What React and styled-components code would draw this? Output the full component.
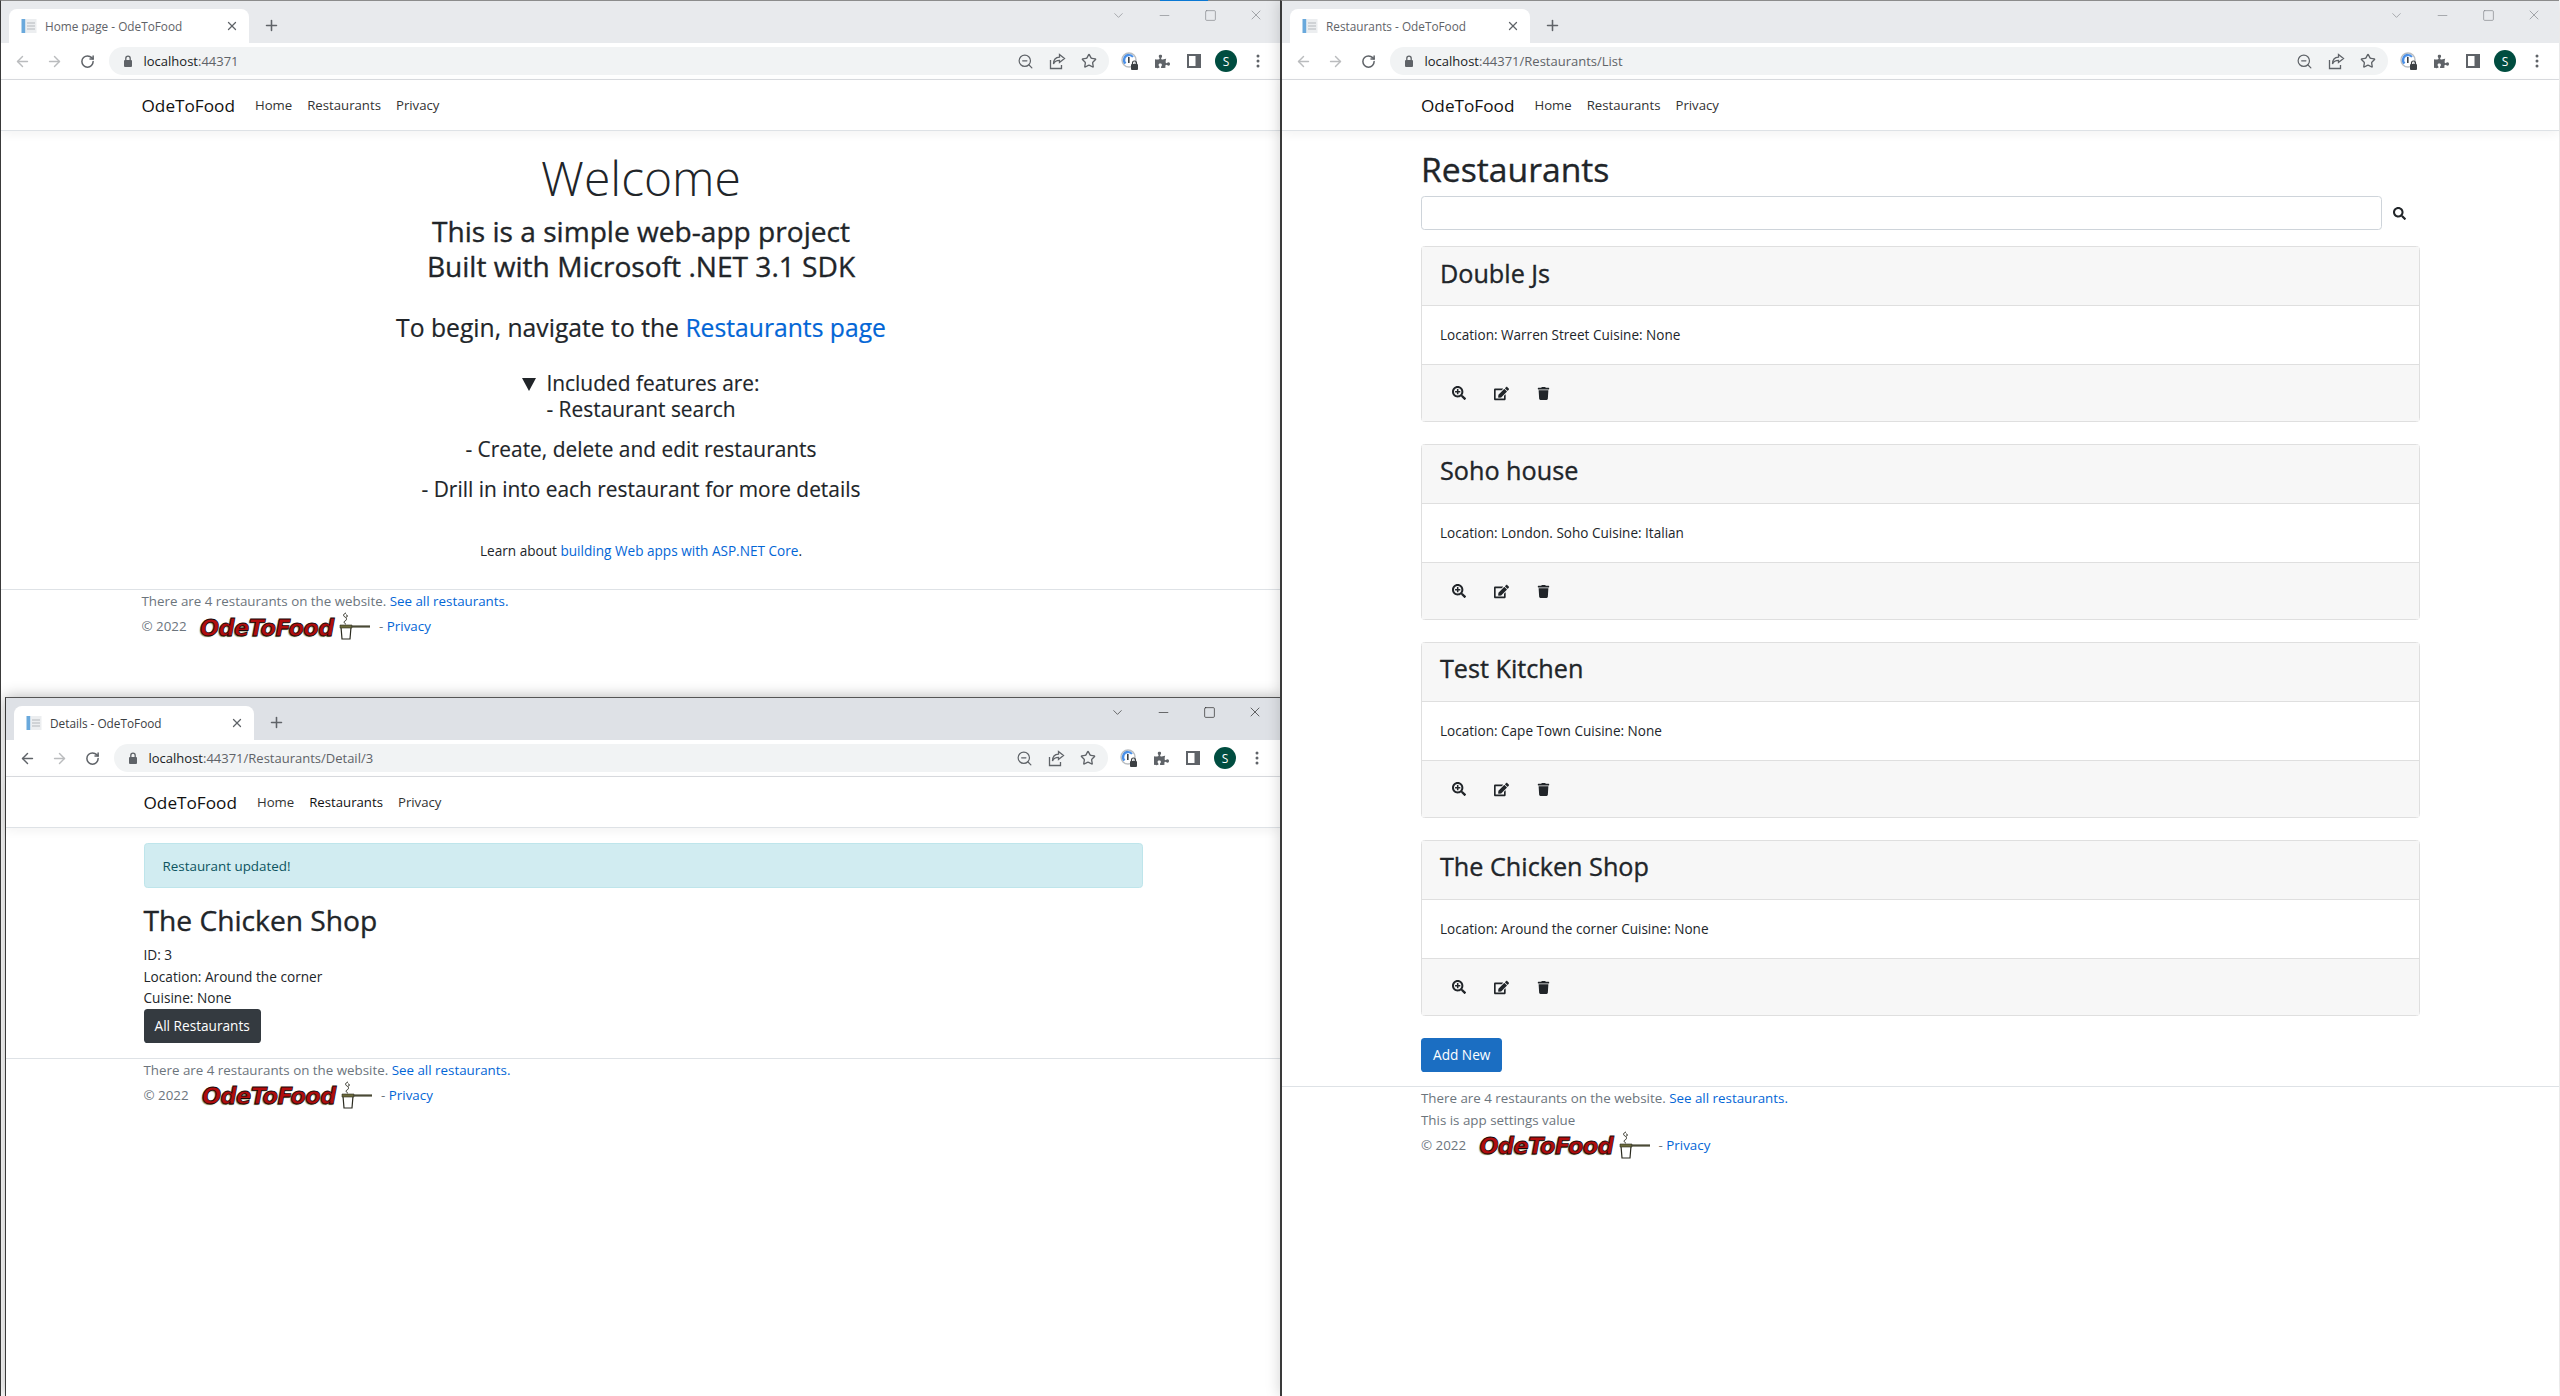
import React from 'react';
import styled, { createGlobalStyle, css } from 'styled-components';
import { FaSearch, FaSearchPlus, FaEdit, FaTrash, FaPuzzlePiece } from 'react-icons/fa';
import { ArrowLeft, ArrowRight, RotateCw, ZoomOut, Star, X, Plus, Minus, Square, ChevronDown } from 'lucide-react';

const GlobalStyle = createGlobalStyle`
* {
    box-sizing: border-box;
}
html, body {
    margin: 0;
    padding: 0;
    background: #fff;
}
body {
    font-family: "Open Sans", "Noto Sans", sans-serif;
    color: #212529;
}
a {
    color: #0366d6;
    text-decoration: none;
}
`;

// the headings in the shot sit between regular and semibold
const mediumWeight = css`
font-weight: 500;
-webkit-text-stroke: 0.35px currentColor;
`;

const Desktop = styled.div`
position: relative;
width: 2560px;
height: 1396px;
overflow: hidden;
background: #fff;
`;

const Window = styled.div`
position: absolute;
left: ${(p) => p.$left}px;
top: ${(p) => p.$top}px;
width: ${(p) => p.$width}px;
height: ${(p) => p.$height}px;
background: #fff;
display: flex;
flex-direction: column;
border-left: ${(p) => p.$edge}px solid #3a3a3a;
border-top: 1px solid ${(p) => (p.$focused ? '#555' : '#8c8c8c')};
border-right: ${(p) => (p.$focused ? '1px solid #3a3a3a' : '0')};
box-shadow: 0 0 14px rgba(0, 0, 0, ${(p) => (p.$focused ? 0.3 : 0.18)});
`;

const TaskbarGlint = styled.div`
position: absolute;
left: 1160px;
top: 0;
width: 48px;
height: 1px;
background: #0a78d4;
z-index: 5;
`;

const TabStrip = styled.div`
height: 42px;
flex-shrink: 0;
display: flex;
align-items: flex-end;
padding-left: 8px;
background: ${(p) => (p.$focused ? '#dee1e6' : '#e8eaed')};
`;

const Tab = styled.div`
width: 240px;
height: 34px;
background: #fff;
border-radius: 8px 8px 0 0;
display: flex;
align-items: center;
padding: 0 8px 0 12px;
font-size: 11.8px;
color: ${(p) => (p.$focused ? '#3c4043' : '#5f6368')};
`;

const TabTitle = styled.span`
flex: 1;
margin-left: 8px;
white-space: nowrap;
`;

const TabClose = styled.span`
display: flex;
margin-right: 2px;
color: #5f6368;
`;

const NewTab = styled.span`
display: flex;
margin: 0 0 9px 14px;
color: #5f6368;
`;

const WindowControls = styled.div`
margin-left: auto;
margin-right: 2px;
align-self: flex-start;
display: flex;
align-items: center;
height: 28px;
color: ${(p) => (p.$focused ? '#1f1f1f' : '#7f8286')};
`;

const WindowControl = styled.span`
width: 46px;
display: flex;
justify-content: center;
`;

const Toolbar = styled.div`
height: 36px;
flex-shrink: 0;
display: flex;
align-items: center;
padding: 0 ${(p) => p.$tail}px 0 5px;
background: #fff;
border-bottom: 1px solid #dadce0;
box-sizing: content-box;
`;

const NavButton = styled.span`
width: 32.5px;
display: flex;
justify-content: center;
color: ${(p) => (p.$off ? '#babcbe' : '#5f6368')};
`;

const Omnibox = styled.div`
flex: 1;
height: 28px;
margin: 0 8px 0 5px;
padding: 0 12px 0 13px;
border-radius: 14px;
background: #f1f3f4;
display: flex;
align-items: center;
font-size: 13px;
color: #5f6368;
`;

const Host = styled.span`
margin-left: 10px;
color: #202124;
`;

const OmniIcons = styled.div`
margin-left: auto;
display: flex;
align-items: center;
gap: 15px;
color: #5f6368;
`;

const ToolIcons = styled.div`
display: flex;
align-items: center;
gap: 10px;
margin-left: 2px;
color: #5f6368;
`;

const ToolSlot = styled.span`
width: 22px;
display: flex;
justify-content: center;
`;

const Avatar = styled.span`
width: 22px;
height: 22px;
border-radius: 50%;
background: #004d40;
color: #fff;
font-size: 12px;
display: flex;
align-items: center;
justify-content: center;
`;

const Navbar = styled.nav`
height: 51px;
flex-shrink: 0;
border-bottom: 1px solid #dee2e6;
box-shadow: 0 3px 10px rgba(0, 0, 0, 0.05);
`;

const Container = styled.div`
width: 999px;
margin: 0 auto;
`;

const NavInner = styled(Container)`
height: 100%;
display: flex;
align-items: center;
`;

const Brand = styled.span`
font-size: 17.2px;
color: #111;
margin-right: 20px;
`;

const NavLink = styled.span`
font-size: 13.2px;
margin-right: 15px;
color: ${(p) => (p.$active ? '#111' : '#333')};
`;

const Main = styled.main`
padding-top: ${(p) => p.$top}px;
padding-bottom: ${(p) => p.$bottom}px;
`;

const Center = styled.div`
text-align: center;
`;

const Welcome = styled.h1`
margin: 0;
font-size: 48px;
font-weight: 300;
line-height: 60px;
color: #212529;
`;

const Lead = styled.h3`
margin: 6px 0 0;
font-size: 28.1px;
line-height: 35px;
${mediumWeight}
`;

const Begin = styled.h3`
margin: 26px 0 0;
font-size: 24.7px;
font-weight: 500;
-webkit-text-stroke: 0.2px currentColor;
line-height: 35px;
`;

const Features = styled.div`
margin-top: 25px;
font-size: 20.9px;
font-weight: 500;
-webkit-text-stroke: 0.15px currentColor;
line-height: 26px;
`;

const Marker = styled.span`
display: inline-block;
width: 0;
height: 0;
margin-right: 10px;
border-left: 7px solid transparent;
border-right: 7px solid transparent;
border-top: 13px solid #212529;
`;

const Feature = styled.div`
margin-bottom: ${(p) => p.$gap}px;
`;

const Learn = styled.p`
margin: 39px 0 0;
font-size: 13.6px;
line-height: 20px;
`;

const Alert = styled.div`
height: 45px;
padding: 0 18px;
display: flex;
align-items: center;
font-size: 13.4px;
color: #0c5460;
background: #d1ecf1;
border: 1px solid #bee5eb;
border-radius: 3.6px;
`;

const DetailTitle = styled.h2`
margin: 15px 0 7px;
font-size: 28.2px;
line-height: 34px;
${mediumWeight}
`;

const DetailLine = styled.div`
font-size: 13.65px;
line-height: 21.5px;
`;

const Button = styled.button`
display: block;
height: 34px;
padding: 0 ${(p) => p.$pad}px;
font-family: inherit;
font-size: 13.65px;
color: #fff;
background: ${(p) => p.$bg};
border: 0;
border-radius: 3.6px;
`;

const PageTitle = styled.h1`
margin: 0 0 5px;
font-size: 33.7px;
line-height: 43px;
${mediumWeight}
`;

const SearchRow = styled.div`
display: flex;
align-items: center;
margin-bottom: 16px;
`;

const SearchInput = styled.div`
flex: 0 0 961px;
height: 34px;
border: 1px solid #ced4da;
border-radius: 3.6px;
`;

const SearchButton = styled.span`
display: flex;
margin-left: 11px;
color: #212529;
`;

const Card = styled.section`
height: 176.2px;
margin-bottom: 21.8px;
border: 1px solid #dfdfdf;
border-radius: 3.6px;
display: flex;
flex-direction: column;
`;

const CardHeader = styled.header`
height: 59px;
padding: 0 18px 7px;
display: flex;
align-items: center;
background: #f7f7f7;
border-bottom: 1px solid #dfdfdf;
`;

const CardName = styled.h3`
margin: 0;
font-size: 25.2px;
${mediumWeight}
`;

const CardBody = styled.div`
height: 59px;
padding: 0 18px;
display: flex;
align-items: center;
font-size: 13.55px;
border-bottom: 1px solid #dfdfdf;
`;

const CardFooter = styled.footer`
flex: 1;
display: flex;
align-items: center;
padding-left: 30px;
gap: 28px;
background: #f7f7f7;
color: #212529;
`;

const Footer = styled.footer`
border-top: 1px solid #dee2e6;
padding-top: 0;
font-size: 13.35px;
line-height: 22px;
color: #6c757d;
`;

const FootLine = styled.div`
display: flex;
align-items: center;
white-space: pre;
`;

const Logo = styled.span`
margin: 4px 4px 0 10px;
width: 135px;
font-family: "DejaVu Sans", sans-serif;
font-size: 22.5px;
font-weight: 700;
font-style: italic;
line-height: 21px;
letter-spacing: -0.6px;
color: #b10d0d;
-webkit-text-stroke: 0.8px #160606;
text-shadow: -1px 1px 1px #8d8d62;
white-space: nowrap;
`;

const PanSlot = styled.span`
display: flex;
margin-right: 8px;
`;

const Favicon = () => (
    <svg width="16" height="16" viewBox="0 0 16 16">
        <rect x="0.5" y="1" width="4" height="14" fill="#6aa9dc" />
        <rect x="4.5" y="1" width="11" height="14" fill="#eceef0" />
        <path d="M6 5h8M6 8h8M6 11h8" stroke="#b4b8bc" />
    </svg>
);

const Lock = () => (
    <svg width="12" height="12" viewBox="0 0 12 12" fill="#5f6368">
        <rect x="2" y="5" width="8" height="7" rx="1" />
        <path d="M3.8 5V3.4a2.2 2.2 0 0 1 4.4 0V5" fill="none" stroke="#5f6368" strokeWidth="1.3" />
    </svg>
);

const ShareIcon = () => (
    <svg width="17" height="17" viewBox="0 0 17 17" fill="none" stroke="#5f6368" strokeWidth="1.3">
        <path d="M1.5 7v8.5h11V12" />
        <path d="M10.5 1.5L15.5 5.5l-5 4V7.3c-3 0-5 1.2-6 3.7 0-4 2-6.7 6-6.9z" />
    </svg>
);

const ExtensionIcon = () => (
    <svg width="18" height="18" viewBox="0 0 18 18">
        <circle cx="8" cy="8" r="7" fill="none" stroke="#b9bdc1" strokeWidth="1.4" />
        <path d="M8 3a5 5 0 0 0-3.5 8.5" fill="none" stroke="#4a90e8" strokeWidth="2.4" />
        <path d="M8 3a5 5 0 0 1 4 2" fill="none" stroke="#4a90e8" strokeWidth="2" />
        <rect x="7" y="5" width="1.6" height="6" fill="#3c4043" />
        <rect x="10" y="12" width="7" height="6" rx="1" fill="#3c4043" />
        <path d="M11.5 12v-1a2 2 0 0 1 4 0v1" fill="none" stroke="#3c4043" strokeWidth="1.2" />
    </svg>
);

const PanelIcon = () => (
    <svg width="14" height="14" viewBox="0 0 14 14">
        <rect width="14" height="14" fill="#5f6368" />
        <rect x="2" y="2" width="6.5" height="10" fill="#fff" />
    </svg>
);

const MenuDots = () => (
    <svg width="4" height="14" viewBox="0 0 4 14" fill="#5f6368">
        <circle cx="2" cy="2" r="1.5" />
        <circle cx="2" cy="7" r="1.5" />
        <circle cx="2" cy="12" r="1.5" />
    </svg>
);

const PanIcon = () => (
    <svg width="32" height="28" viewBox="0 0 32 28" fill="none" stroke="#2b2b20">
        <path d="M7 1c-3 1-3 3-1 4s2 3 0 4 0 3 1 3M7 3c2 0 2 2 0 2" strokeWidth="1" />
        <path d="M2 15h10l-1 12H3z" fill="#fff" strokeWidth="1.2" />
        <path d="M1 13h12v3H1z" fill="#6b6a3c" strokeWidth="0.6" />
        <path d="M12 14.5h19" stroke="#4a4a36" strokeWidth="2.2" />
    </svg>
);

const BrowserWindow = ({ title, host, path = '', focused = false, canGoBack = false, tail = 12, children, ...frame }) => (
    <Window {...frame} $focused={focused}>
        <TabStrip $focused={focused}>
            <Tab $focused={focused}>
                <Favicon />
                <TabTitle>{title}</TabTitle>
                <TabClose><X size={14} strokeWidth={2.2} /></TabClose>
            </Tab>
            <NewTab><Plus size={17} strokeWidth={2.2} /></NewTab>
            <WindowControls $focused={focused}>
                <WindowControl><ChevronDown size={15} strokeWidth={1} /></WindowControl>
                <WindowControl><Minus size={15} strokeWidth={1} /></WindowControl>
                <WindowControl><Square size={13} strokeWidth={1.2} /></WindowControl>
                <WindowControl><X size={16} strokeWidth={1} /></WindowControl>
            </WindowControls>
        </TabStrip>
        <Toolbar $tail={tail}>
            <NavButton $off={!canGoBack}><ArrowLeft size={17} strokeWidth={2} /></NavButton>
            <NavButton $off><ArrowRight size={17} strokeWidth={2} /></NavButton>
            <NavButton><RotateCw size={15} strokeWidth={2.4} /></NavButton>
            <Omnibox>
                <Lock />
                <Host>{host}</Host>
                <span>{path}</span>
                <OmniIcons>
                    <ZoomOut size={17} strokeWidth={1.7} />
                    <ShareIcon />
                    <Star size={16} strokeWidth={2} />
                </OmniIcons>
            </Omnibox>
            <ToolIcons>
                <ToolSlot><ExtensionIcon /></ToolSlot>
                <ToolSlot><FaPuzzlePiece size={15} /></ToolSlot>
                <ToolSlot><PanelIcon /></ToolSlot>
                <ToolSlot><Avatar>S</Avatar></ToolSlot>
                <ToolSlot><MenuDots /></ToolSlot>
            </ToolIcons>
        </Toolbar>
        {children}
    </Window>
);

const SiteNav = ({ activeRestaurants = false }) => (
    <Navbar>
        <NavInner>
            <Brand>OdeToFood</Brand>
            <NavLink>Home</NavLink>
            <NavLink $active={activeRestaurants}>Restaurants</NavLink>
            <NavLink>Privacy</NavLink>
        </NavInner>
    </Navbar>
);

const SiteFooter = ({ note }) => (
    <Footer>
        <Container>
            <FootLine>There are 4 restaurants on the website. <a href="#all">See all restaurants.</a></FootLine>
            {note && <FootLine>{note}</FootLine>}
            <FootLine>
                © 2022 <Logo>OdeToFood</Logo><PanSlot><PanIcon /></PanSlot>- <a href="#privacy">Privacy</a>
            </FootLine>
        </Container>
    </Footer>
);

const restaurants = [
    { name: 'Double Js', location: 'Warren Street', cuisine: 'None' },
    { name: 'Soho house', location: 'London. Soho', cuisine: 'Italian' },
    { name: 'Test Kitchen', location: 'Cape Town', cuisine: 'None' },
    { name: 'The Chicken Shop', location: 'Around the corner', cuisine: 'None' },
];

const App = () => (
    <Desktop>
        <GlobalStyle />
        <BrowserWindow title="Home page - OdeToFood" host="localhost" path=":44371" $left={0} $top={0} $width={1281} $height={1396} $edge={1}>
            <SiteNav />
            <Main $top={17} $bottom={28}>
                <Container>
                    <Center>
                        <Welcome>Welcome</Welcome>
                        <Lead>This is a simple web-app project<br />Built with Microsoft .NET 3.1 SDK</Lead>
                        <Begin>To begin, navigate to the <a href="#restaurants">Restaurants page</a></Begin>
                        <Features>
                            <Feature $gap={0}><Marker />Included features are:</Feature>
                            <Feature $gap={14}>- Restaurant search</Feature>
                            <Feature $gap={14}>- Create, delete and edit restaurants</Feature>
                            <Feature $gap={0}>- Drill in into each restaurant for more details</Feature>
                        </Features>
                        <Learn>Learn about <a href="#docs">building Web apps with ASP.NET Core</a>.</Learn>
                    </Center>
                </Container>
            </Main>
            <SiteFooter />
        </BrowserWindow>

        <BrowserWindow title="Details - OdeToFood" host="localhost" path=":44371/Restaurants/Detail/3" focused canGoBack $left={5} $top={697} $width={1276} $height={699} $edge={1}>
            <SiteNav activeRestaurants />
            <Main $top={15} $bottom={15}>
                <Container>
                    <Alert>Restaurant updated!</Alert>
                    <DetailTitle>The Chicken Shop</DetailTitle>
                    <DetailLine>ID: 3</DetailLine>
                    <DetailLine>Location: Around the corner</DetailLine>
                    <DetailLine>Cuisine: None</DetailLine>
                    <Button $bg="#343a40" $pad={11}>All Restaurants</Button>
                </Container>
            </Main>
            <SiteFooter />
        </BrowserWindow>

        <BrowserWindow title="Restaurants - OdeToFood" host="localhost" path=":44371/Restaurants/List" tail={11} $left={1280} $top={0} $width={1279} $height={1396} $edge={2}>
            <SiteNav />
            <Main $top={17} $bottom={14}>
                <Container>
                    <PageTitle>Restaurants</PageTitle>
                    <SearchRow>
                        <SearchInput />
                        <SearchButton><FaSearch size={13} /></SearchButton>
                    </SearchRow>
                    {restaurants.map((r) => (
                        <Card key={r.name}>
                            <CardHeader><CardName>{r.name}</CardName></CardHeader>
                            <CardBody>Location: {r.location} Cuisine: {r.cuisine}</CardBody>
                            <CardFooter>
                                <FaSearchPlus size={14} />
                                <FaEdit size={15} />
                                <FaTrash size={13} />
                            </CardFooter>
                        </Card>
                    ))}
                    <Button $bg="#1b6ec2" $pad={12}>Add New</Button>
                </Container>
            </Main>
            <SiteFooter note="This is app settings value" />
        </BrowserWindow>
        <TaskbarGlint />
    </Desktop>
);

export default App;
